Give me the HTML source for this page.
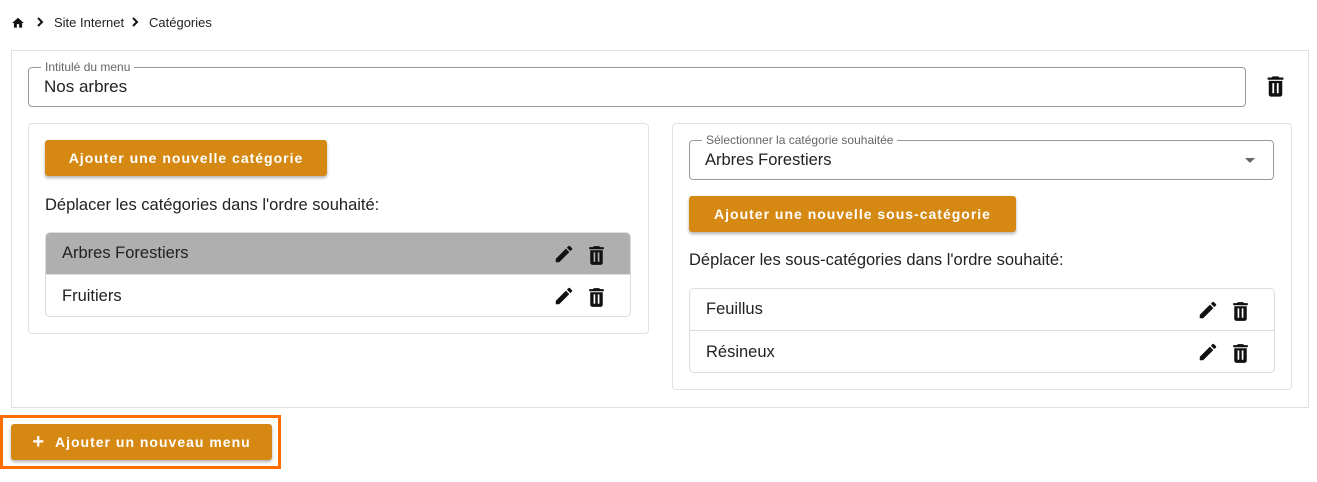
<!DOCTYPE html>
<html><head><meta charset="utf-8"><style>
*{box-sizing:border-box;margin:0;padding:0}
body{width:1317px;height:482px;background:#fff;font-family:"Liberation Sans",sans-serif;color:#222;position:relative;overflow:hidden}
.abs{position:absolute}
.btn{position:absolute;background:#d68912;color:#fff;font-weight:bold;font-size:14px;letter-spacing:1px;border-radius:3px;box-shadow:0 2px 3px rgba(0,0,0,.3);display:flex;align-items:center;justify-content:center}
.card{position:absolute;border:1px solid #e0e0e6;border-radius:4px;background:#fff}
.field{position:absolute;border:1px solid #9a9a9a;border-radius:4px}
.lbl{position:absolute;top:-8px;left:12px;background:#fff;padding:0 4px;font-size:12px;color:#666}
.list{position:absolute;border:1px solid #ddd;border-radius:5px;overflow:hidden}
.row{height:42px;display:flex;align-items:center;padding-left:16px;font-size:16.5px;position:relative;border-bottom:1px solid #ddd}
.row:last-child{border-bottom:none}
.ic{position:absolute;top:10px}
</style></head><body>
<svg class="abs" style="left:11px;top:16px" width="14" height="14" viewBox="0 0 24 24"><path d="M10 20v-6h4v6h5v-8h3L12 3 2 12h3v8z" fill="#111"/></svg>
<svg class="abs" style="left:35px;top:17px" width="10" height="10" viewBox="0 0 10 10"><path d="M3 1l4 4-4 4" stroke="#111" stroke-width="2" fill="none"/></svg>
<div class="abs" style="left:54px;top:15px;font-size:13px">Site Internet</div>
<svg class="abs" style="left:130px;top:17px" width="10" height="10" viewBox="0 0 10 10"><path d="M3 1l4 4-4 4" stroke="#111" stroke-width="2" fill="none"/></svg>
<div class="abs" style="left:149px;top:15px;font-size:13px">Catégories</div>
<div class="card" style="left:11px;top:50px;width:1298px;height:358px;border-radius:0"></div>
<div class="field" style="left:28px;top:67px;width:1218px;height:40px"><span class="lbl">Intitulé du menu</span><span class="abs" style="left:15px;top:9px;font-size:17px">Nos arbres</span></div>
<svg class="abs" style="left:1262px;top:73px" width="27" height="27" viewBox="0 0 24 24"><path d="M6 19c0 1.1.9 2 2 2h8c1.1 0 2-.9 2-2V7H6v12zM19 4h-3.5l-1-1h-5l-1 1H5v2h14V4z" fill="#111"/><path d="M10 9v9M14 9v9" stroke="#fff" stroke-width="1.6"/></svg>

<div class="card" style="left:28px;top:123px;width:621px;height:211px"></div>
<div class="btn" style="left:45px;top:140px;width:282px;height:36px">Ajouter une nouvelle catégorie</div>
<div class="abs" style="left:45px;top:196px;font-size:16.5px">Déplacer les catégories dans l'ordre souhaité:</div>
<div class="list" style="left:45px;top:232px;width:586px;height:85px">
<div class="row" style="background:#b0afaf">Arbres Forestiers<svg class="ic" style="left:507px" width="22" height="22" viewBox="0 0 24 24"><path d="M3 17.25V21h3.75L17.81 9.94l-3.75-3.75L3 17.25zM20.71 7.04a1 1 0 000-1.41l-2.34-2.34a1 1 0 00-1.41 0l-1.83 1.83 3.75 3.75 1.83-1.83z" fill="#111"/></svg><svg class="ic" style="left:538px" width="25" height="25" viewBox="0 0 24 24"><path d="M6 19c0 1.1.9 2 2 2h8c1.1 0 2-.9 2-2V7H6v12zM19 4h-3.5l-1-1h-5l-1 1H5v2h14V4z" fill="#111"/><path d="M10 9v9M14 9v9" stroke="#b0afaf" stroke-width="1.6"/></svg></div>
<div class="row">Fruitiers<svg class="ic" style="left:507px" width="22" height="22" viewBox="0 0 24 24"><path d="M3 17.25V21h3.75L17.81 9.94l-3.75-3.75L3 17.25zM20.71 7.04a1 1 0 000-1.41l-2.34-2.34a1 1 0 00-1.41 0l-1.83 1.83 3.75 3.75 1.83-1.83z" fill="#111"/></svg><svg class="ic" style="left:538px" width="25" height="25" viewBox="0 0 24 24"><path d="M6 19c0 1.1.9 2 2 2h8c1.1 0 2-.9 2-2V7H6v12zM19 4h-3.5l-1-1h-5l-1 1H5v2h14V4z" fill="#111"/><path d="M10 9v9M14 9v9" stroke="#fff" stroke-width="1.6"/></svg></div>
</div>

<div class="card" style="left:672px;top:123px;width:620px;height:267px"></div>
<div class="field" style="left:689px;top:140px;width:585px;height:40px"><span class="lbl">Sélectionner la catégorie souhaitée</span><span class="abs" style="left:15px;top:10px;font-size:16.5px">Arbres Forestiers</span><span class="abs" style="right:18px;top:17px;width:0;height:0;border-left:5px solid transparent;border-right:5px solid transparent;border-top:5px solid #666"></span></div>
<div class="btn" style="left:689px;top:196px;width:327px;height:36px">Ajouter une nouvelle sous-catégorie</div>
<div class="abs" style="left:689px;top:251px;font-size:16.5px">Déplacer les sous-catégories dans l'ordre souhaité:</div>
<div class="list" style="left:689px;top:288px;width:586px;height:85px">
<div class="row">Feuillus<svg class="ic" style="left:507px" width="22" height="22" viewBox="0 0 24 24"><path d="M3 17.25V21h3.75L17.81 9.94l-3.75-3.75L3 17.25zM20.71 7.04a1 1 0 000-1.41l-2.34-2.34a1 1 0 00-1.41 0l-1.83 1.83 3.75 3.75 1.83-1.83z" fill="#111"/></svg><svg class="ic" style="left:538px" width="25" height="25" viewBox="0 0 24 24"><path d="M6 19c0 1.1.9 2 2 2h8c1.1 0 2-.9 2-2V7H6v12zM19 4h-3.5l-1-1h-5l-1 1H5v2h14V4z" fill="#111"/><path d="M10 9v9M14 9v9" stroke="#fff" stroke-width="1.6"/></svg></div>
<div class="row">Résineux<svg class="ic" style="left:507px" width="22" height="22" viewBox="0 0 24 24"><path d="M3 17.25V21h3.75L17.81 9.94l-3.75-3.75L3 17.25zM20.71 7.04a1 1 0 000-1.41l-2.34-2.34a1 1 0 00-1.41 0l-1.83 1.83 3.75 3.75 1.83-1.83z" fill="#111"/></svg><svg class="ic" style="left:538px" width="25" height="25" viewBox="0 0 24 24"><path d="M6 19c0 1.1.9 2 2 2h8c1.1 0 2-.9 2-2V7H6v12zM19 4h-3.5l-1-1h-5l-1 1H5v2h14V4z" fill="#111"/><path d="M10 9v9M14 9v9" stroke="#fff" stroke-width="1.6"/></svg></div>
</div>

<div class="abs" style="left:0;top:415px;width:281px;height:54px;border:3px solid #ff6d00"></div>
<div class="btn" style="left:11px;top:424px;width:261px;height:36px"><span style="font-size:20px;margin-right:10px">+</span>Ajouter un nouveau menu</div>
</body></html>
